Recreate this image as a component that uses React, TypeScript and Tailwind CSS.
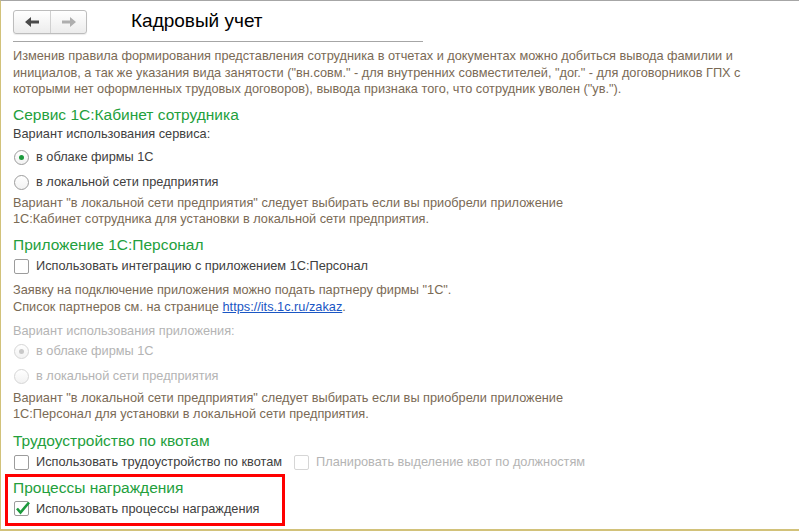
import React from 'react';

const FONT = { fontFamily: '"Liberation Sans", Arial, sans-serif' };

function Arrow({ dir, color }: { dir: 'left' | 'right'; color: string }) {
  return (
    <svg width="16" height="12" viewBox="0 0 16 12" style={{ transform: dir === 'right' ? 'scaleX(-1)' : undefined }}>
      <path d="M1 6 L7 1 L7 4.5 L15 4.5 L15 7.5 L7 7.5 L7 11 Z" fill={color} />
    </svg>
  );
}

function Radio({ checked, disabled }: { checked?: boolean; disabled?: boolean }) {
  return (
    <span
      className={`flex h-[15px] w-[15px] shrink-0 items-center justify-center rounded-full border bg-gradient-to-b from-white to-[#f2f2f2] ${
        disabled ? 'border-[#d6d6d6]' : 'border-[#9c9c9c]'
      }`}
    >
      {checked && <span className={`h-[5px] w-[5px] rounded-full ${disabled ? 'bg-[#c8c8c8]' : 'bg-[#1c9a3c]'}`} />}
    </span>
  );
}

function Check({ checked, disabled }: { checked?: boolean; disabled?: boolean }) {
  return (
    <span
      className={`relative flex h-[15px] w-[15px] shrink-0 items-center justify-center rounded-[2px] border bg-white ${
        disabled ? 'border-[#d6d6d6]' : 'border-[#9c9c9c]'
      }`}
    >
      {checked && (
        <svg width="16" height="14" viewBox="0 0 16 14" className="absolute left-[0px] top-[-1px]">
          <path d="M2 7.5 L5.5 11.5 L14 1.5" fill="none" stroke="#1c9a3c" strokeWidth="2.6" />
        </svg>
      )}
    </span>
  );
}

function Heading({ children }: { children: React.ReactNode }) {
  return <div className="h-[20px] text-[15.5px] leading-[20px] text-[#23a03c]">{children}</div>;
}

function Note({ children, className = '' }: { children: React.ReactNode; className?: string }) {
  return <div className={`text-[12.75px] text-[#7a6a55] ${className}`}>{children}</div>;
}

export default function App() {
  return (
    <div
      className="relative h-[531px] w-[799px] overflow-hidden border-l border-t border-b-[2px] border-l-[#d2c27a] border-t-[#a6a6a6] border-b-[#d2c27a] bg-white"
      style={FONT}
    >
      <div className="pl-[12px]">
        {/* Header */}
        <div className="flex h-[40px] items-start pt-[9px]">
          <div className="flex h-[24px] w-[74px] overflow-hidden rounded-[3px] border border-[#bdbdbd] bg-gradient-to-b from-white to-[#ececec] shadow-[0_1px_1px_rgba(0,0,0,0.08)]">
            <div className="flex w-[37px] items-center justify-center border-r border-[#d0d0d0]">
              <Arrow dir="left" color="#4a4a4a" />
            </div>
            <div className="flex flex-1 items-center justify-center">
              <Arrow dir="right" color="#aeaeae" />
            </div>
          </div>
          <div className="ml-[44px] mt-[-1px] text-[19px] leading-[24px] text-black">Кадровый учет</div>
        </div>
        <div className="h-px w-[410px] bg-[#a6a6a6]" />

        <Note className="mt-[6px] pr-[30px] leading-[16.5px]">
          Изменив правила формирования представления сотрудника в отчетах и документах можно добиться вывода фамилии и
          инициалов, а так же указания вида занятости ("вн.совм." - для внутренних совместителей, "дог." - для договорников ГПХ с
          которыми нет оформленных трудовых договоров), вывода признака того, что сотрудник уволен ("ув.").
        </Note>

        {/* Сервис */}
        <div className="mt-[7px]">
          <Heading>Сервис 1С:Кабинет сотрудника</Heading>
        </div>
        <div className="mt-[1px] h-[16px] text-[12.75px] leading-[16px] text-[#404040]">Вариант использования сервиса:</div>
        <div className="mt-[3px] flex h-[25px] items-center gap-[7px] pl-px text-[12.75px] text-[#404040]">
          <Radio checked />
          <span>в облаке фирмы 1С</span>
        </div>
        <div className="flex h-[25px] items-center gap-[7px] pl-px text-[12.75px] text-[#404040]">
          <Radio />
          <span>в локальной сети предприятия</span>
        </div>
        <Note className="leading-[16px]">
          Вариант "в локальной сети предприятия" следует выбирать если вы приобрели приложение
          <br />
          1С:Кабинет сотрудника для установки в локальной сети предприятия.
        </Note>

        {/* Приложение */}
        <div className="mt-[8px]">
          <Heading>Приложение 1С:Персонал</Heading>
        </div>
        <div className="flex h-[23px] items-center gap-[7px] pl-px text-[12.75px] text-[#404040]">
          <Check />
          <span>Использовать интеграцию с приложением 1С:Персонал</span>
        </div>
        <Note className="mt-[3px] leading-[17px]">
          Заявку на подключение приложения можно подать партнеру фирмы "1С".
          <br />
          Список партнеров см. на странице <span className="text-[#1a56c4] underline">https://its.1c.ru/zakaz</span>.
        </Note>
        <div className="mt-[8px] h-[16px] text-[12.75px] leading-[16px] text-[#b4b4b4]">Вариант использования приложения:</div>
        <div className="flex h-[25px] items-center gap-[7px] pl-px text-[12.75px] text-[#b4b4b4]">
          <Radio checked disabled />
          <span>в облаке фирмы 1С</span>
        </div>
        <div className="flex h-[25px] items-center gap-[7px] pl-px text-[12.75px] text-[#b4b4b4]">
          <Radio disabled />
          <span>в локальной сети предприятия</span>
        </div>
        <Note className="mt-[1px] leading-[16px]">
          Вариант "в локальной сети предприятия" следует выбирать если вы приобрели приложение
          <br />
          1С:Персонал для установки в локальной сети предприятия.
        </Note>

        {/* Квоты */}
        <div className="mt-[9px]">
          <Heading>Трудоустройство по квотам</Heading>
        </div>
        <div className="flex h-[23px] items-center pl-px text-[12.75px]">
          <div className="flex items-center gap-[7px] text-[#404040]">
            <Check />
            <span>Использовать трудоустройство по квотам</span>
          </div>
          <div className="ml-[12px] flex items-center gap-[7px] text-[#b4b4b4]">
            <Check disabled />
            <span>Планировать выделение квот по должностям</span>
          </div>
        </div>

        {/* Награждения */}
        <div className="ml-[-8px] h-[52px] w-[280px] border-[3px] border-[#ff0000] pl-[5px] pt-[1px]">
          <Heading>Процессы награждения</Heading>
          <div className="flex h-[22px] items-center gap-[7px] pl-px text-[12.75px] text-[#404040]">
            <Check checked />
            <span>Использовать процессы награждения</span>
          </div>
        </div>
      </div>
    </div>
  );
}
